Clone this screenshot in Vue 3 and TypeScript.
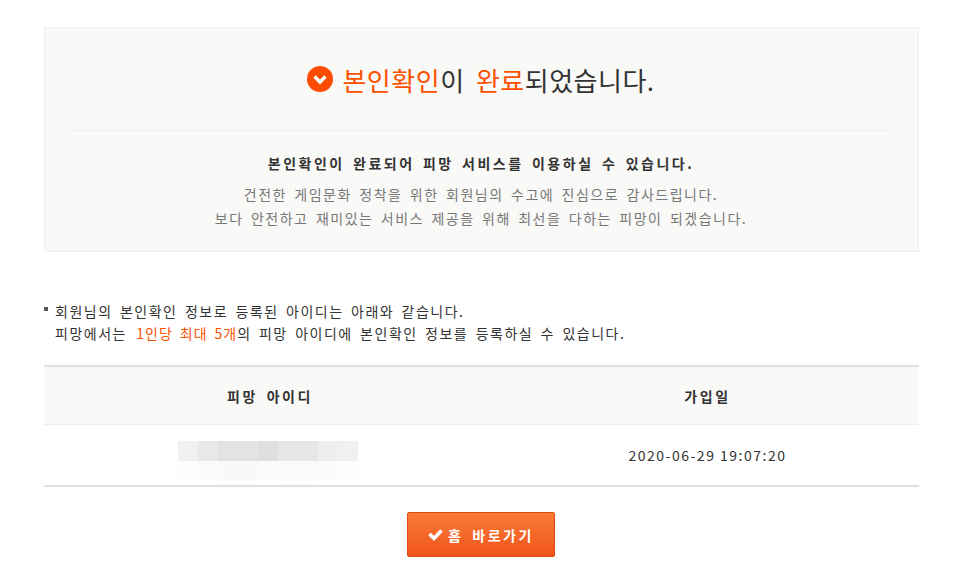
<script setup lang="ts">
// blurred account id, one row of grey per entry
const blurRows: string[][] = [
  ['#f1f1f1', '#e8e8e8', '#e3e3e3', '#e4e4e4', '#dfdfdf', '#e6e6e6', '#e6e6e6', '#eeeeee', '#f0f0f0'],
  ['#fdfdfd', '#fbfbfb', '#f9f9f9', '#f9f9f9', '#fbfbfb', '#fafafa', '#fafafa', '#fbfbfb', '#fdfdfd'],
]
</script>

<template>
  <div class="page">
    <section class="done-box">
      <h1 class="done-title">
        <span class="done-icon">
          <svg width="26" height="26" viewBox="0 0 26 26">
            <circle cx="13" cy="13" r="13" fill="#fc4c02" />
            <path d="M7.5 10.5 L13 16 L18.5 10.5" fill="none" stroke="#fff" stroke-width="3.4" />
          </svg>
        </span>
        <span><em>본인확인</em>이 <em>완료</em>되었습니다.</span>
      </h1>
      <div class="done-body">
        <p class="done-lead">본인확인이 완료되어 피망 서비스를 이용하실 수 있습니다.</p>
        <p class="done-desc">
          건전한 게임문화 정착을 위한 회원님의 수고에 진심으로 감사드립니다.<br />
          보다 안전하고 재미있는 서비스 제공을 위해 최선을 다하는 피망이 되겠습니다.
        </p>
      </div>
    </section>

    <p class="notice">
      회원님의 본인확인 정보로 등록된 아이디는 아래와 같습니다.<br />
      피망에서는 <em>1인당 최대 5개</em>의 피망 아이디에 본인확인 정보를 등록하실 수 있습니다.
    </p>

    <table class="id-table">
      <thead>
        <tr>
          <th class="col-id">피망 아이디</th>
          <th>가입일</th>
        </tr>
      </thead>
      <tbody>
        <tr>
          <td class="blur-cell">
            <div class="blur-id">
              <div v-for="(row, i) in blurRows" :key="i" class="blur-row">
                <i v-for="(c, j) in row" :key="j" :style="{ background: c }" />
              </div>
            </div>
          </td>
          <td>2020-06-29 19:07:20</td>
        </tr>
      </tbody>
    </table>

    <div class="actions">
      <a class="home-btn" href="#">
        <svg width="15" height="14" viewBox="0 0 15 14">
          <path d="M1.5 6 L6 10.5 L13.5 2.5" fill="none" stroke="#fff" stroke-width="3.6" />
        </svg>
        <span>홈 바로가기</span>
      </a>
    </div>
  </div>
</template>

<style scoped>
.page {
  width: 875px;
  margin-left: 44px;
  padding-top: 27px;
  font-family: "Noto Sans CJK KR", "Liberation Sans", sans-serif;
  font-size: 14px;
  color: #333;
}

em {
  font-style: normal;
  color: #fb5000;
}

.done-box {
  box-sizing: border-box;
  height: 225px;
  padding: 0 26px 0 25px;
  border: 1px solid #eeeeec;
  background: #f9f9f7;
}

.done-title {
  display: flex;
  align-items: center;
  justify-content: center;
  gap: 9px;
  height: 102px;
  margin: 0;
  border-bottom: 1px solid #eeeeec;
  font-size: 26px;
  font-weight: 400;
  letter-spacing: 0.5px;
  word-spacing: 5px;
  color: #333;
}

.done-icon {
  display: flex;
}

.done-body {
  padding-top: 21px;
  text-align: center;
}

.done-lead {
  margin: 0 0 8px;
  font-weight: 700;
  line-height: 22px;
  letter-spacing: 2.5px;
  word-spacing: 2.7px;
}

.done-desc {
  margin: 0;
  line-height: 24px;
  letter-spacing: 1.5px;
  word-spacing: 2.8px;
  color: #777;
}

.notice {
  position: relative;
  margin: 48px 0 0;
  padding-left: 11px;
  line-height: 22px;
  letter-spacing: 1.5px;
  word-spacing: 2.8px;
}

.notice em {
  margin-left: 2px;
  letter-spacing: 1px;
}

.notice::before {
  content: "";
  position: absolute;
  left: 0;
  top: 7px;
  width: 4px;
  height: 4px;
  background: #555;
}

.id-table {
  width: 100%;
  margin-top: 21px;
  border-collapse: collapse;
  border-top: 2px solid #e0e0e0;
  border-bottom: 2px solid #e0e0e0;
}

.id-table th {
  height: 57px;
  padding: 0;
  background: #f9f9f7;
  font-weight: 700;
  letter-spacing: 2.6px;
  word-spacing: 3px;
  border-bottom: 1px solid #eeeeec;
}

.id-table .col-id {
  width: 452px;
}

.id-table td {
  box-sizing: border-box;
  height: 61px;
  padding: 0;
  text-align: center;
  letter-spacing: 1.5px;
}

.id-table .blur-cell {
  padding: 16px 0 4px;
}

.blur-id {
  width: 180px;
  margin-left: 134px;
}

.blur-row {
  display: flex;
  height: 20px;
}

.blur-row i {
  flex: 1;
}

.actions {
  display: flex;
  justify-content: center;
  margin-top: 25px;
  padding-right: 1px;
}

.home-btn {
  box-sizing: border-box;
  display: flex;
  align-items: center;
  justify-content: center;
  gap: 5px;
  width: 148px;
  height: 45px;
  border: 1px solid #dd4a0b;
  border-radius: 2px;
  background: linear-gradient(#f97c38, #f0531b);
  color: #fff;
  font-weight: 700;
  letter-spacing: 2.6px;
  word-spacing: 3px;
  text-decoration: none;
}
</style>
